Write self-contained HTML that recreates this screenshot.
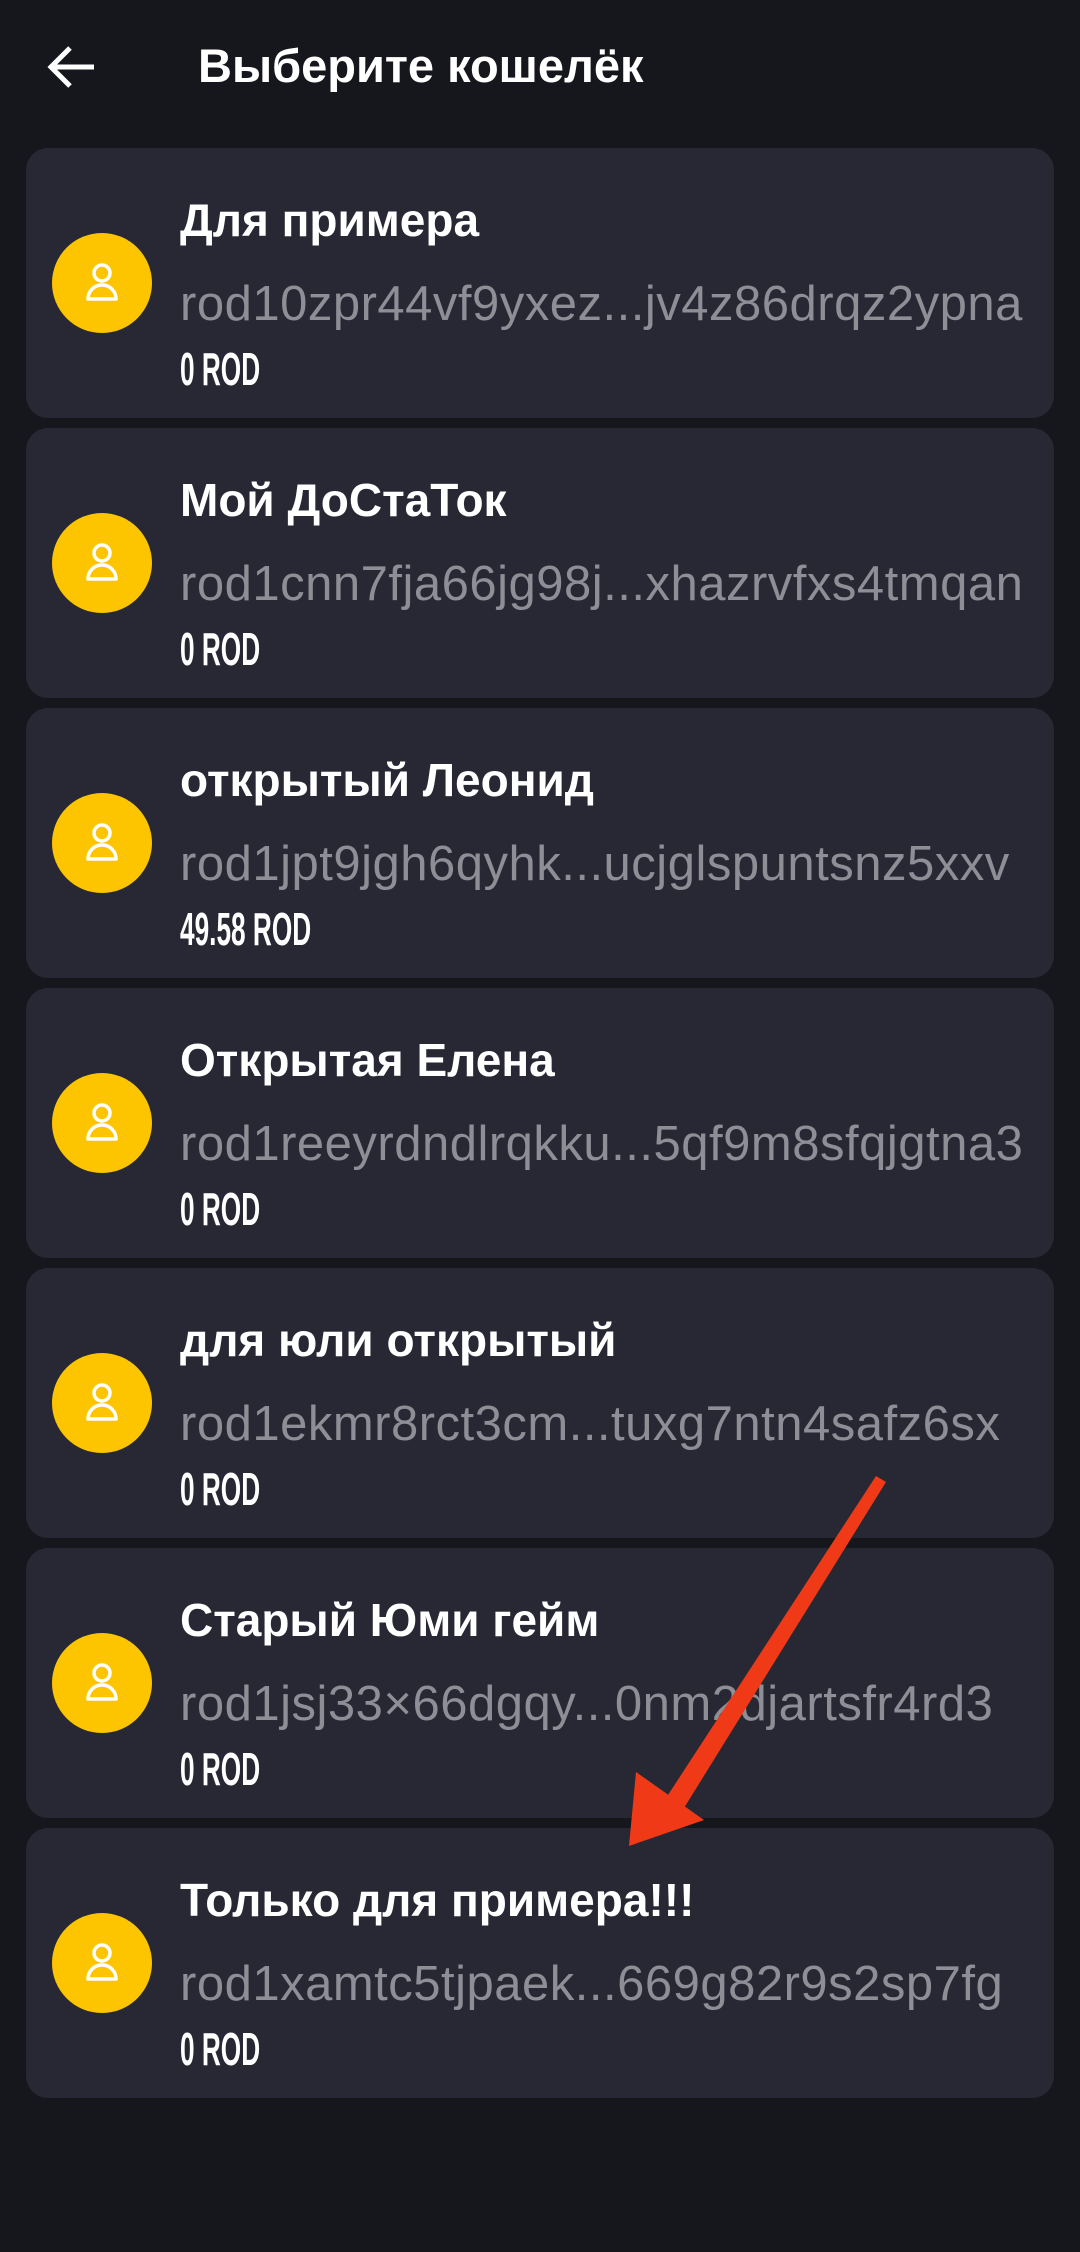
<!DOCTYPE html>
<html><head><meta charset="utf-8"><style>
html,body{margin:0;padding:0;}
body{width:1080px;height:2252px;background:#16171c;position:relative;overflow:hidden;font-family:"Liberation Sans","Noto Sans CJK SC",sans-serif;}
.hdr{position:absolute;left:198px;top:38px;font-size:47px;font-weight:bold;color:#fff;line-height:56px;}
.back{position:absolute;left:46px;top:44px;}
.card{position:absolute;left:26px;width:1028px;height:270px;background:#272833;border-radius:22px;}
.av{position:absolute;left:26px;top:85px;width:100px;height:100px;border-radius:50%;background:#fdc500;}
.av svg{position:absolute;left:30px;top:28px;}
.t{position:absolute;left:154px;top:46px;font-size:46px;line-height:52px;font-weight:bold;color:#fff;white-space:nowrap;}
.a{position:absolute;left:154px;top:128px;font-size:49px;line-height:56px;letter-spacing:0.5px;color:#8d8e96;white-space:nowrap;}
.b{position:absolute;left:154px;top:195px;font-size:46px;line-height:52px;font-weight:bold;color:#fff;white-space:nowrap;transform:scaleX(0.57);transform-origin:left top;}
</style></head><body>
<svg class="back" width="52" height="46" viewBox="0 0 52 46"><path d="M48 23H6M24 4L5 23l19 19" stroke="#fff" stroke-width="5" fill="none"/></svg>
<div class="hdr">Выберите кошелёк</div>

<div class="card" style="top:148px"><div class="av"><svg width="40" height="44" viewBox="0 0 40 44"><circle cx="20" cy="12" r="8" stroke="#fff" stroke-width="3.5" fill="none"/><path d="M6 38a14 14 0 0 1 28 0z" stroke="#fff" stroke-width="3.5" fill="none" stroke-linejoin="round"/></svg></div><div class="t">Для примера</div><div class="a">rod10zpr44vf9yxez...jv4z86drqz2ypna</div><div class="b">0 ROD</div></div>
<div class="card" style="top:428px"><div class="av"><svg width="40" height="44" viewBox="0 0 40 44"><circle cx="20" cy="12" r="8" stroke="#fff" stroke-width="3.5" fill="none"/><path d="M6 38a14 14 0 0 1 28 0z" stroke="#fff" stroke-width="3.5" fill="none" stroke-linejoin="round"/></svg></div><div class="t">Мой ДоСтаТок</div><div class="a">rod1cnn7fja66jg98j...xhazrvfxs4tmqan</div><div class="b">0 ROD</div></div>
<div class="card" style="top:708px"><div class="av"><svg width="40" height="44" viewBox="0 0 40 44"><circle cx="20" cy="12" r="8" stroke="#fff" stroke-width="3.5" fill="none"/><path d="M6 38a14 14 0 0 1 28 0z" stroke="#fff" stroke-width="3.5" fill="none" stroke-linejoin="round"/></svg></div><div class="t">открытый Леонид</div><div class="a">rod1jpt9jgh6qyhk...ucjglspuntsnz5xxv</div><div class="b">49.58 ROD</div></div>
<div class="card" style="top:988px"><div class="av"><svg width="40" height="44" viewBox="0 0 40 44"><circle cx="20" cy="12" r="8" stroke="#fff" stroke-width="3.5" fill="none"/><path d="M6 38a14 14 0 0 1 28 0z" stroke="#fff" stroke-width="3.5" fill="none" stroke-linejoin="round"/></svg></div><div class="t">Открытая Елена</div><div class="a">rod1reeyrdndlrqkku...5qf9m8sfqjgtna3</div><div class="b">0 ROD</div></div>
<div class="card" style="top:1268px"><div class="av"><svg width="40" height="44" viewBox="0 0 40 44"><circle cx="20" cy="12" r="8" stroke="#fff" stroke-width="3.5" fill="none"/><path d="M6 38a14 14 0 0 1 28 0z" stroke="#fff" stroke-width="3.5" fill="none" stroke-linejoin="round"/></svg></div><div class="t">для юли открытый</div><div class="a">rod1ekmr8rct3cm...tuxg7ntn4safz6sx</div><div class="b">0 ROD</div></div>
<div class="card" style="top:1548px"><div class="av"><svg width="40" height="44" viewBox="0 0 40 44"><circle cx="20" cy="12" r="8" stroke="#fff" stroke-width="3.5" fill="none"/><path d="M6 38a14 14 0 0 1 28 0z" stroke="#fff" stroke-width="3.5" fill="none" stroke-linejoin="round"/></svg></div><div class="t">Старый Юми гейм</div><div class="a">rod1jsj33×66dgqy...0nm2djartsfr4rd3</div><div class="b">0 ROD</div></div>
<div class="card" style="top:1828px"><div class="av"><svg width="40" height="44" viewBox="0 0 40 44"><circle cx="20" cy="12" r="8" stroke="#fff" stroke-width="3.5" fill="none"/><path d="M6 38a14 14 0 0 1 28 0z" stroke="#fff" stroke-width="3.5" fill="none" stroke-linejoin="round"/></svg></div><div class="t">Только для примера!!!</div><div class="a">rod1xamtc5tjpaek...669g82r9s2sp7fg</div><div class="b">0 ROD</div></div>

<svg style="position:absolute;left:0;top:0" width="1080" height="2252"><polygon points="876,1476 886,1482 684,1808 666,1798" fill="#f03a17"/><polygon points="629,1846 636,1772 704,1820" fill="#f03a17"/></svg>
</body></html>
